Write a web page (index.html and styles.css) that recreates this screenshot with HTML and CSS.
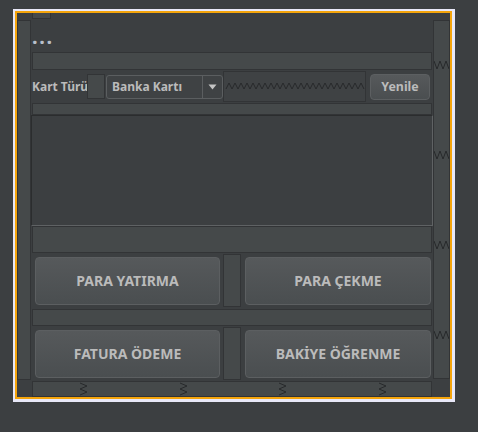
FILE: index.html
```html
<!DOCTYPE html>
<html lang="tr">
<head>
<meta charset="utf-8">
<title>ATM</title>
<link rel="stylesheet" href="styles.css">
</head>
<body>
<div class="stage">
  <div class="frame">
    <div class="canvas">
      <div class="gap side-left"></div>
      <div class="content">
        <div class="gap top-stub"></div>
        <div class="dots">...</div>
        <div class="gap bar bar1"></div>
        <div class="card-row">
          <span class="label">Kart Türü</span>
          <div class="gap small-sq"></div>
          <div class="combo">
            <span class="combo-text">Banka Kartı</span>
            <span class="combo-arrow"><svg width="9" height="6" viewBox="0 0 9 6"><polygon points="0.5,0.5 8.5,0.5 4.5,5.5" fill="#c4c4c4"/></svg></span>
          </div>
          <div class="spring">
            <svg width="141" height="29" viewBox="0 0 141 29"><polyline points="2,17 5,11 8,17 11,11 14,17 17,11 20,17 23,11 26,17 29,11 32,17 35,11 38,17 41,11 44,17 47,11 50,17 53,11 56,17 59,11 62,17 65,11 68,17 71,11 74,17 77,11 80,17 83,11 86,17 89,11 92,17 95,11 98,17 101,11 104,17 107,11 110,17 113,11 116,17 119,11 122,17 125,11 128,17 131,11 134,17 137,11 140,17" fill="none" stroke="#27292b" stroke-width="1"/></svg>
          </div>
          <button class="btn btn-small">Yenile</button>
        </div>
        <div class="gap bar bar2"></div>
        <div class="textarea"></div>
        <div class="gap bar bar3"></div>
        <div class="btn-row">
          <button class="btn btn-big">PARA YATIRMA</button>
          <div class="gap mid-sq"></div>
          <button class="btn btn-big btn-right">PARA ÇEKME</button>
        </div>
        <div class="gap bar bar4"></div>
        <div class="btn-row">
          <button class="btn btn-big">FATURA ÖDEME</button>
          <div class="gap mid-sq"></div>
          <button class="btn btn-big btn-right">BAKİYE ÖĞRENME</button>
        </div>
        <div class="gap bar bar5">
          <svg width="398" height="14" viewBox="0 0 398 14">
            <g fill="none" stroke="#27292b" stroke-width="1">
              <polyline points="47,1 54,4 47,7 54,10 47,13"/>
              <polyline points="147,1 154,4 147,7 154,10 147,13"/>
              <polyline points="246,1 253,4 246,7 253,10 246,13"/>
              <polyline points="346,1 353,4 346,7 353,10 346,13"/>
            </g>
          </svg>
        </div>
      </div>
      <div class="gap side-right">
        <svg width="15" height="357" viewBox="0 0 15 357">
          <g fill="none" stroke="#27292b" stroke-width="1">
            <polyline points="0,40 3,48 6,40 9,48 12,40 15,48"/>
            <polyline points="0,130 3,138 6,130 9,138 12,130 15,138"/>
            <polyline points="0,220 3,228 6,220 9,228 12,220 15,228"/>
            <polyline points="0,310 3,318 6,310 9,318 12,310 15,318"/>
          </g>
        </svg>
      </div>
    </div>
  </div>
</div>
</body>
</html>
```
FILE: styles.css
```css
* { box-sizing: border-box; }
html, body { margin: 0; padding: 0; }
body {
  width: 478px;
  height: 432px;
  overflow: hidden;
  background: #3c3f41;
  font-family: "Noto Sans", "Open Sans", "DejaVu Sans", sans-serif;
  color: #bbbbbb;
}
svg { display: block; }
.stage { padding: 9px 0 0 13px; }
.frame {
  width: 442px;
  height: 393px;
  border-style: solid;
  border-color: #e8e8f8;
  border-width: 2px 3px 3px 2px;
}
.canvas {
  height: 100%;
  display: flex;
  align-items: flex-start;
  background: #3c3f41;
  border: 2px solid #f5a50c;
}
.gap {
  background: #45494a;
  border: 1px solid #323436;
}
.side-left { margin-top: 7px; width: 14px; height: 360px; flex: none; }
.side-right { margin-top: 7px; width: 17px; height: 359px; flex: none; }
.content { width: 402px; flex: none; display: flex; flex-direction: column; }
.top-stub { margin-left: 1px; width: 19px; height: 6px; border-top: none; }
.dots {
  margin: 10px 0 0 1px;
  height: 21px;
  font-size: 20px;
  font-weight: 700;
  line-height: 16px;
  letter-spacing: 1.6px;
  color: #b8bfca;
}
.bar { margin-left: 1px; width: 400px; }
.bar1 { margin-top: 2px; height: 18px; }
.card-row {
  margin: 1px 0 0 1px;
  height: 31px;
  display: flex;
  align-items: center;
}
.label { width: 55px; flex: none; font-size: 12px; font-weight: 700; white-space: nowrap; overflow: hidden; }
.small-sq { width: 18px; height: 25px; flex: none; }
.combo {
  margin-left: 1px;
  width: 117px;
  height: 24px;
  flex: none;
  display: flex;
  align-items: center;
  border: 1px solid #5b5e60;
  border-radius: 3px;
  background: #3f4244;
}
.combo-text { flex: 1; padding-left: 5px; font-size: 12px; font-weight: 700; white-space: nowrap; }
.combo-arrow {
  width: 20px;
  height: 100%;
  border-left: 1px solid #5b5e60;
  display: flex;
  align-items: center;
  justify-content: center;
}
.spring {
  width: 143px;
  height: 31px;
  flex: none;
  border: 1px solid #323436;
  background: #3f4244;
}
.btn {
  font-family: inherit;
  color: #bbbbbb;
  font-weight: 700;
  border: 1px solid #5c5f61;
  border-radius: 4px;
  background: linear-gradient(#56595b, #4a4e50);
  padding: 0;
  display: flex;
  align-items: center;
  justify-content: center;
  flex: none;
}
.btn-small { margin-left: 4px; width: 60px; height: 26px; font-size: 12.4px; }
.bar2 { margin-top: 1px; height: 12px; }
.textarea {
  height: 111px;
  width: 402px;
  background: #3c3f41;
  border-style: solid;
  border-width: 1px;
  border-color: #2b2d2e #5f6264 #5f6264 #2b2d2e;
}
.bar3 { margin-top: 0; height: 27px; }
.btn-row {
  margin-top: 1px;
  height: 53px;
  display: flex;
  align-items: center;
}
.btn-big { margin-left: 4px; width: 185px; height: 48px; font-size: 14px; }
.btn-right { width: 186px; }
.mid-sq { margin-left: 3px; width: 18px; height: 53px; flex: none; }
.bar4 { margin-top: 2px; height: 17px; }
.bar5 { margin-top: 1px; height: 16px; }
```
